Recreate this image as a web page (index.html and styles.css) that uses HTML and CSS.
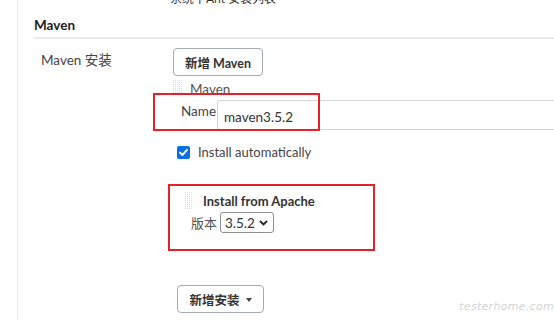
FILE: index.html
```html
<!DOCTYPE html>
<html lang="zh">
<head>
<meta charset="utf-8">
<link rel="stylesheet" href="styles.css">
</head>
<body>
<div class="rail">
  <div class="top-note">系统下Ant 安装列表</div>
  <h2 class="section-title">Maven</h2>
  <div class="row">
    <div class="row-label">Maven 安装</div>
    <div class="row-body">
      <button class="btn">新增 Maven</button>
      <div class="chunk-head">
        <span class="handle"></span>
        <span class="chunk-title">Maven</span>
      </div>
      <div class="name-row">
        <span class="name-label">Name</span>
        <div class="name-input">maven3.5.2</div>
        <div class="mark mark-name"></div>
      </div>
      <label class="check-row">
        <span class="checkbox">
          <svg width="13" height="13" viewBox="0 0 13 13"><rect x="0" y="0" width="13" height="13" rx="2" fill="#0b6fde"/><path d="M3 6.6 L5.4 9 L10 3.9" fill="none" stroke="#fff" stroke-width="1.9" stroke-linecap="round" stroke-linejoin="round"/></svg>
        </span>
        <span class="check-text">Install automatically</span>
      </label>
      <div class="installer">
        <div class="installer-head">
          <span class="handle handle-tall"></span>
          <span class="installer-title">Install from Apache</span>
        </div>
        <div class="version-row">
          <span class="version-label">版本</span>
          <div class="select">
            <span>3.5.2</span>
            <svg width="9" height="6" viewBox="0 0 9 6"><path d="M1 1 L4.5 4.5 L8 1" fill="none" stroke="#222" stroke-width="1.8"/></svg>
          </div>
        </div>
      </div>
      <button class="btn btn-add">新增安装 <span class="caret"></span></button>
    </div>
  </div>
  <div class="watermark">testerhome.com</div>
</div>
</body>
</html>
```
FILE: styles.css
```css
html, body {
  margin: 0;
  padding: 0;
  background: #fff;
  width: 554px;
  height: 329px;
  overflow: hidden;
}
body {
  font-family: "Lato", "Noto Sans CJK SC", sans-serif;
  color: #333;
  font-size: 13px;
}
.rail {
  position: relative;
  margin-left: 17px;
  border-left: 1px solid #ececec;
  height: 329px;
  padding-left: 16px;
  box-sizing: border-box;
}
.top-note {
  margin-top: -9px;
  margin-left: 136px;
  font-size: 12px;
  line-height: 16px;
  color: #333;
  white-space: nowrap;
}
.section-title {
  margin: 9px 0 0 0;
  font-size: 13.5px;
  font-weight: 700;
  line-height: 18px;
  color: #222;
  padding-bottom: 3px;
  border-bottom: 2px solid #ebebeb;
}
.row {
  display: flex;
  margin-top: 8px;
}
.row-label {
  width: 132px;
  padding-left: 7px;
  padding-top: 4px;
  font-size: 13.5px;
  line-height: 18px;
  color: #444;
  white-space: nowrap;
}
.row-body {
  display: flex;
  flex-direction: column;
  align-items: flex-start;
  flex: 1;
  padding-top: 1px;
}
.btn {
  font-family: inherit;
  font-size: 12.5px;
  font-weight: 700;
  color: #333;
  background: #fff;
  border: 1.5px solid #a2abb6;
  border-radius: 4px;
  height: 28px;
  padding: 0;
  width: 90px;
  white-space: nowrap;
  cursor: pointer;
}
.chunk-head {
  display: flex;
  align-items: flex-start;
  height: 16px;
  margin-top: 4px;
  overflow: hidden;
}
.handle {
  display: inline-block;
  width: 9px;
  height: 16px;
  background-color: #dadada;
  background-image:
    linear-gradient(90deg, transparent 1px, #fff 1px),
    linear-gradient(180deg, transparent 1px, #fff 1px);
  background-size: 2px 2px;
}
.handle-tall {
  height: 18px;
  width: 8px;
}
.chunk-title {
  margin-left: 8px;
  line-height: 18px;
  margin-top: 0;
  font-size: 13.5px;
  color: #555;
}
.name-row {
  position: relative;
  display: flex;
  align-items: flex-start;
  margin-top: 4px;
  width: 381px;
}
.name-label {
  margin-left: 8px;
  width: 36px;
  line-height: 18px;
  margin-top: 2px;
  font-size: 13.5px;
  color: #444;
}
.name-input {
  flex: 1;
  height: 30px;
  box-sizing: border-box;
  border: 1px solid #d4d4d4;
  border-right: none;
  border-radius: 3px 0 0 3px;
  padding: 7px 6px 0;
  line-height: 18px;
  font-size: 13.5px;
  color: #333;
}
.mark {
  position: absolute;
  border: 2px solid #e8202a;
  box-sizing: border-box;
}
.mark-name {
  left: -20px;
  top: -7px;
  width: 167px;
  height: 38px;
}
.check-row {
  display: flex;
  align-items: center;
  margin-top: 15px;
  margin-left: 4px;
  height: 14px;
}
.checkbox {
  display: inline-flex;
  width: 13px;
  height: 13px;
}
.check-text {
  margin-left: 8px;
  line-height: 18px;
  font-size: 13px;
  color: #444;
}
.installer {
  margin-top: 25px;
  margin-left: -5px;
  width: 207px;
  height: 67px;
  box-sizing: border-box;
  border: 2px solid #e8202a;
  padding: 6px 0 0 15px;
}
.installer-head {
  display: flex;
  align-items: flex-start;
}
.installer-title {
  margin-left: 10px;
  margin-top: 1px;
  font-weight: 700;
  font-size: 13px;
  line-height: 16px;
  color: #333;
}
.version-row {
  display: flex;
  align-items: center;
  margin-top: 2px;
  margin-left: 6px;
}
.version-label {
  color: #555;
  font-size: 13px;
  line-height: 18px;
}
.select {
  margin-left: 3px;
  width: 54px;
  height: 21px;
  box-sizing: border-box;
  border: 1px solid #8f8f8f;
  border-radius: 3px;
  display: flex;
  align-items: center;
  justify-content: space-between;
  padding: 0 5px 0 4px;
  font-size: 13.5px;
  color: #333;
}
.btn-add {
  margin-top: 34px;
  margin-left: 4px;
  width: 87px;
}
.caret {
  display: inline-block;
  width: 0;
  height: 0;
  border-left: 3.5px solid transparent;
  border-right: 3.5px solid transparent;
  border-top: 4px solid #444;
  vertical-align: middle;
  margin-left: 3px;
  margin-bottom: 2px;
}
.watermark {
  position: absolute;
  right: 0;
  bottom: 7px;
  font-family: "DejaVu Sans", sans-serif;
  font-size: 11px;
  font-style: italic;
  color: #d4d4d4;
  letter-spacing: 0.3px;
}
```
